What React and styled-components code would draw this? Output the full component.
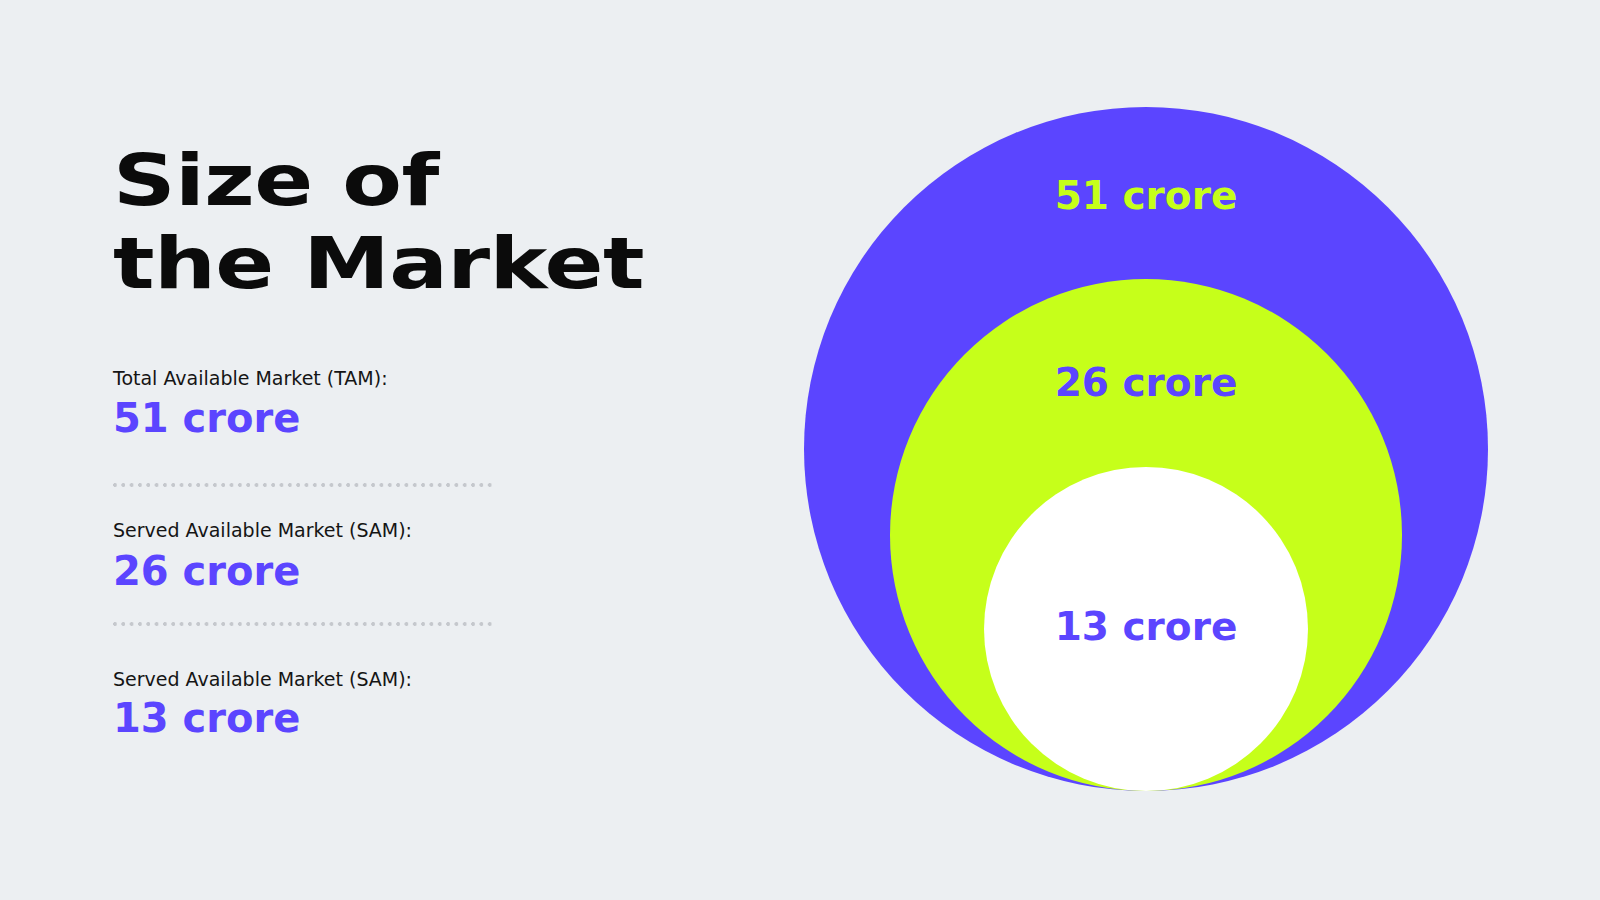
import React from "react";
import styled, { createGlobalStyle } from "styled-components";

const GlobalStyle = createGlobalStyle`
  html, body {
    margin: 0;
    padding: 0;
    background: #eceff2;
  }
  body {
    font-family: "DejaVu Sans", "Liberation Sans", sans-serif;
  }
`;

const PURPLE = "#5b45ff";
const LIME = "#c6ff1a";

const Slide = styled.div`
  width: 1600px;
  height: 900px;
  box-sizing: border-box;
  padding-left: 113px;
  display: flex;
  align-items: flex-start;
  background: #eceff2;
  overflow: hidden;
`;

const LeftColumn = styled.div`
  flex: none;
  width: 691px;
  padding-top: 139px;
  display: flex;
  flex-direction: column;
`;

const Heading = styled.h1`
  margin: 0 0 61px;
  font-family: "DejaVu Sans", sans-serif;
  font-weight: 700;
  font-size: 71px;
  line-height: 83px;
  color: #0b0b0b;
  letter-spacing: -0.5px;
  transform: scaleX(1.225);
  transform-origin: left center;
`;

const Label = styled.div`
  font-family: "DejaVu Sans", sans-serif;
  font-size: 19px;
  line-height: 24px;
  color: #151515;
`;

const Value = styled.div`
  margin-top: ${(p) => p.$gap}px;
  font-family: "DejaVu Sans", sans-serif;
  font-weight: 700;
  font-size: 40px;
  line-height: 48px;
  color: ${PURPLE};
`;

const Divider = styled.div`
  width: 383px;
  height: 4px;
  margin: ${(p) => p.$before}px 0 ${(p) => p.$after}px;
  background-image: radial-gradient(circle at 2px 2px, #c5c8cd 1.7px, transparent 2.2px);
  background-size: 8.33px 4px;
  background-repeat: repeat-x;
`;

const Circle = styled.div`
  flex: none;
  width: ${(p) => p.$size}px;
  height: ${(p) => p.$size}px;
  margin-top: ${(p) => p.$top || 0}px;
  border-radius: 50%;
  background: ${(p) => p.$bg};
  display: flex;
  flex-direction: column;
  align-items: center;
  justify-content: ${(p) => (p.$center ? "center" : "flex-start")};
  box-sizing: border-box;
  padding-bottom: ${(p) => (p.$center ? 6 : 0)}px;
`;

const CircleLabel = styled.div`
  margin-top: ${(p) => p.$offset || 0}px;
  font-family: "DejaVu Sans", sans-serif;
  font-weight: 700;
  font-size: 39px;
  line-height: 39px;
  white-space: nowrap;
  color: ${(p) => p.$color};
`;

const Inner = styled(Circle)`
  margin-top: auto;
`;

const markets = [
  { label: "Total Available Market (TAM):", value: "51 crore", gap: 4 },
  { label: "Served Available Market (SAM):", value: "26 crore", gap: 5 },
  { label: "Served Available Market (SAM):", value: "13 crore", gap: 3 },
];

const dividers = [
  { before: 41, after: 31 },
  { before: 27, after: 41 },
];

export default function App() {
  return (
    <>
      <GlobalStyle />
      <Slide>
        <LeftColumn>
          <Heading>
            Size of
            <br />
            the Market
          </Heading>
          {markets.map((m, i) => (
            <React.Fragment key={i}>
              <Label>{m.label}</Label>
              <Value $gap={m.gap}>{m.value}</Value>
              {dividers[i] && (
                <Divider $before={dividers[i].before} $after={dividers[i].after} />
              )}
            </React.Fragment>
          ))}
        </LeftColumn>

        <Circle $size={684} $top={107} $bg={PURPLE}>
          <CircleLabel $offset={69} $color={LIME}>51 crore</CircleLabel>
          <Inner $size={512} $bg={LIME}>
            <CircleLabel $offset={84} $color={PURPLE}>26 crore</CircleLabel>
            <Inner $size={324} $bg="#ffffff" $center>
              <CircleLabel $color={PURPLE}>13 crore</CircleLabel>
            </Inner>
          </Inner>
        </Circle>
      </Slide>
    </>
  );
}
